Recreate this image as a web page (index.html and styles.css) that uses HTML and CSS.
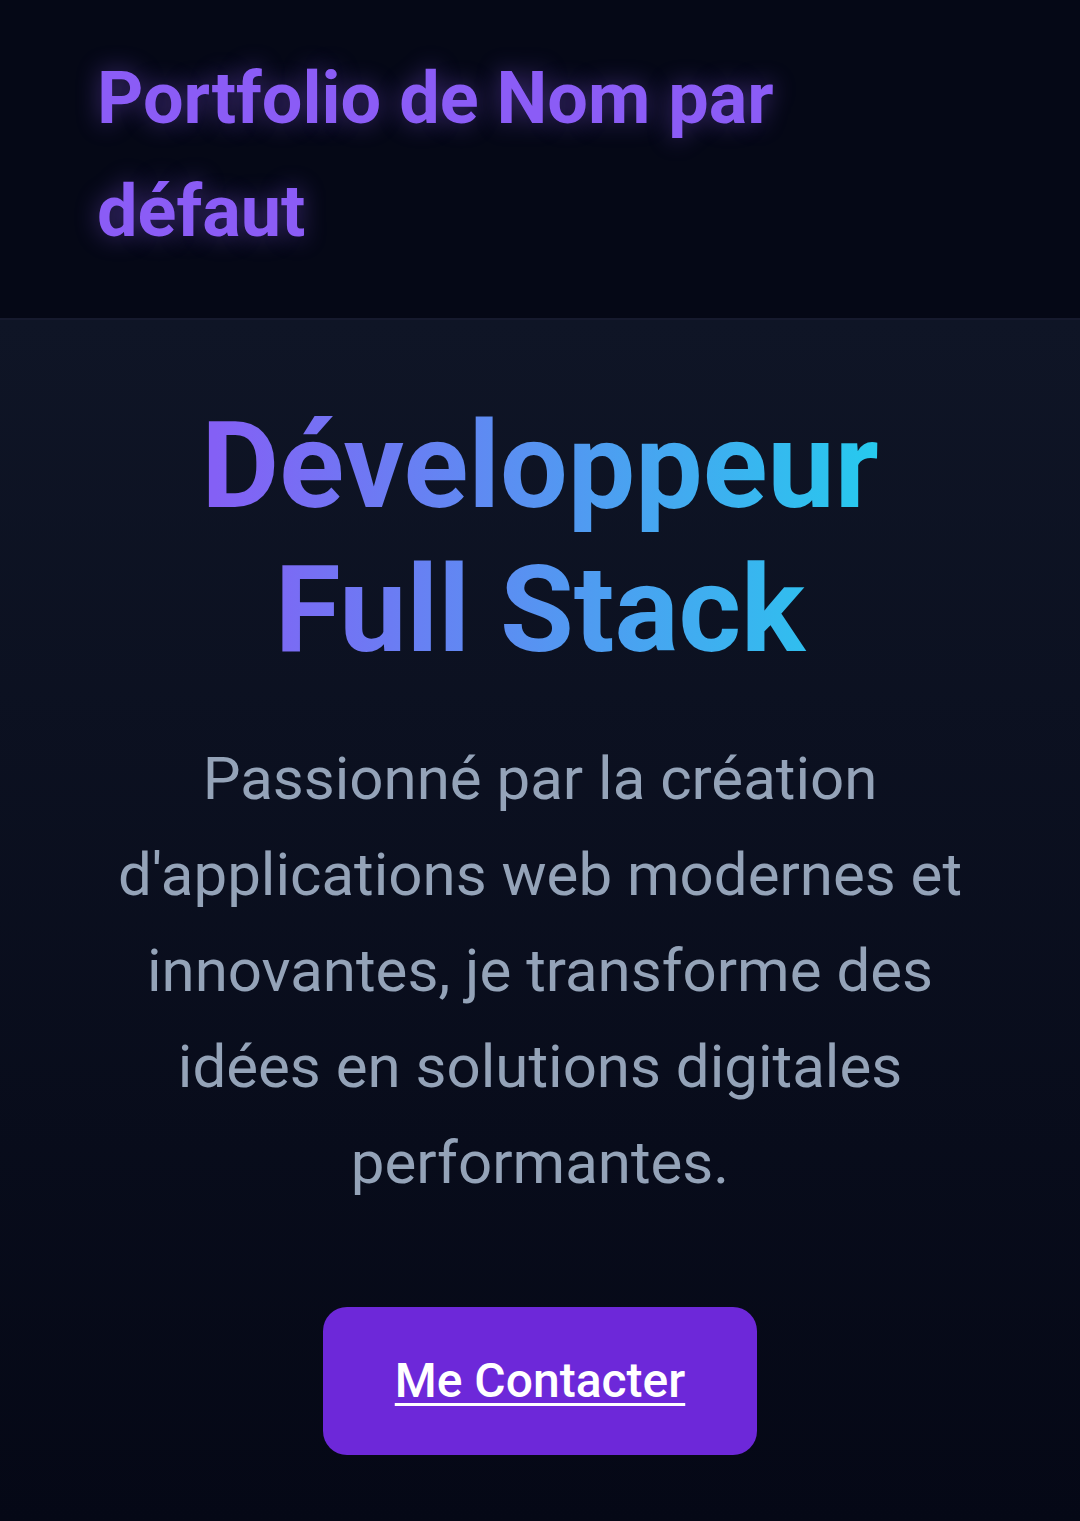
FILE: index.html
```html
<!DOCTYPE html>
<html lang="fr">
<head>
<meta charset="utf-8">
<title>Portfolio</title>
<link rel="stylesheet" href="styles.css">
</head>
<body>
<header class="site-header">
  <div class="brand">Portfolio de Nom par défaut</div>
</header>
<section class="hero">
  <h1 class="hero-title">Développeur Full Stack</h1>
  <p class="hero-text">Passionné par la création d'applications web modernes et innovantes, je transforme des idées en solutions digitales performantes.</p>
  <a class="cta" href="#contact">Me Contacter</a>
</section>
</body>
</html>
```

FILE: styles.css
```css
* { box-sizing: border-box; }
html, body {
  margin: 0;
  padding: 0;
  background: #050816;
  font-family: Roboto, "Noto Sans", Arial, sans-serif;
}
.site-header {
  background: #050816;
  padding: 42px 97px 50px;
  border-bottom: 2px solid #161a2e;
}
.brand {
  color: #8b5cf6;
  font-weight: 700;
  font-size: 72px;
  line-height: 113px;
  text-shadow: 0 0 24px rgba(139, 92, 246, 0.45);
  max-width: 720px;
}
.hero {
  background: linear-gradient(180deg, #0f1526 0%, #050816 100%);
  padding: 74px 60px 66px;
  display: flex;
  flex-direction: column;
  align-items: center;
  text-align: center;
}
.hero-title {
  margin: 0;
  font-size: 120px;
  line-height: 144px;
  font-weight: 700;
  max-width: 720px;
  background: linear-gradient(90deg, #8460f5 5%, #26caee 97%);
  -webkit-background-clip: text;
  background-clip: text;
  color: transparent;
  -webkit-text-fill-color: transparent;
}
.hero-text {
  margin: 49px 0 0;
  max-width: 870px;
  font-size: 60px;
  line-height: 96px;
  color: #94a3b8;
}
.cta {
  margin-top: 96px;
  display: inline-block;
  background: #6d28d9;
  color: #ffffff;
  font-size: 48px;
  font-weight: 500;
  line-height: 56px;
  padding: 46px 72px;
  border-radius: 24px;
  text-decoration: underline;
  text-decoration-thickness: 3px;
  text-underline-offset: 6px;
}
```
